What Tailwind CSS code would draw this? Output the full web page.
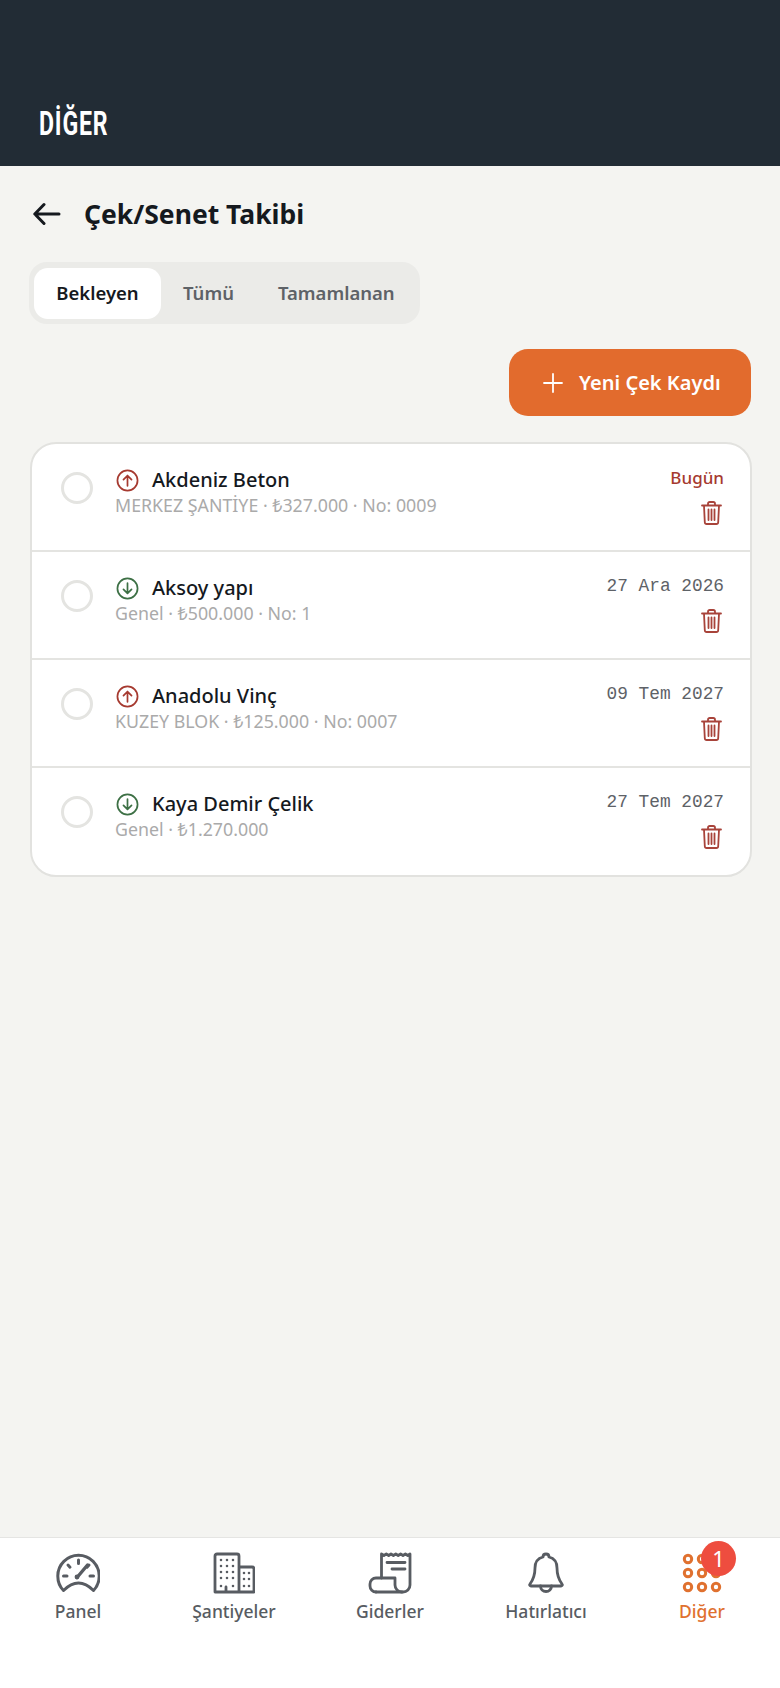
<!DOCTYPE html>
<html lang="tr"><head><meta charset="utf-8"><script src="https://cdn.jsdelivr.net/npm/@tailwindcss/browser@4"></script><title>Çek/Senet Takibi</title></head>
<body class="m-0">
<div class="w-[780px] h-[1688px] flex flex-col bg-[#f4f4f1] overflow-hidden font-['Noto_Sans',sans-serif]">
  <header class="h-[166px] shrink-0 bg-[#222c35] pl-[39px] pt-[102px]">
    <div class="origin-left scale-x-[0.7] text-white font-['Roboto',sans-serif] font-bold text-[33px] leading-[44px] tracking-[1.200px]">DİĞER</div>
  </header>
  <main class="flex-1 px-[29px]">
    <div class="flex items-center h-[36px] mt-[30px] pl-[4px]">
      <svg class="w-[28px] h-[28px]" viewBox="0 0 28 28" fill="none" stroke="#15191e" stroke-width="3" stroke-linecap="round" stroke-linejoin="round"><path d="M26 14H2M11 4.500 1.800 14 11 23.500"/></svg>
      <h1 class="ml-[23px] text-[26.500px] leading-[36px] font-bold text-[#15191e]">Çek/Senet Takibi</h1>
    </div>
    <div class="mt-[30px] w-[391px] h-[62px] rounded-[18px] bg-[#ebebe8] flex items-center pl-[5px] text-[18.500px] font-semibold text-[#5e6267]">
      <div class="w-[127px] h-[51px] rounded-[14px] bg-white text-[#15191e] flex items-center justify-center">Bekleyen</div>
      <div class="ml-[22px]">Tümü</div>
      <div class="ml-[44px]">Tamamlanan</div>
    </div>
    <div class="flex justify-end mt-[25px]">
      <button class="w-[242px] h-[67px] rounded-[19px] bg-[#e26b2d] text-white flex items-center pl-[34px] gap-[16px] text-[20px] font-semibold">
        <svg class="w-[20px] h-[20px]" viewBox="0 0 20 20" stroke="currentColor" stroke-width="1.800" stroke-linecap="round"><path d="M10 1v18M1 10h18"/></svg>
        Yeni Çek Kaydı
      </button>
    </div>
    <section class="mt-[26px] w-[722px] ml-[1px] rounded-[26px] border-2 border-[#e2e2df] bg-white divide-y-2 divide-[#e4e4e1]">
      <div class="h-[108px] flex items-start pl-[29px] pr-[26px] pt-[24px]">
        <span class="w-[32px] h-[32px] mt-[4px] rounded-full border-[3px] border-[#e4e4e1]"></span>
        <div class="ml-[22px] flex-1">
          <div class="flex items-center h-[26px] gap-[13px] pl-[1px] text-[20px] font-medium text-[#15191e]">
            <svg class="w-[23px] h-[23px] -mt-[1px]" viewBox="0 0 24 24" fill="none" stroke="#a63a30" stroke-width="1.800" stroke-linecap="round" stroke-linejoin="round"><circle cx="12" cy="12" r="10.500"/><path d="M12 17.500V7M7.800 11 12 6.800l4.200 4.200"/></svg>
            <span class="-mt-[2px]">Akdeniz Beton</span>
          </div>
          <div class="text-[17.800px] leading-[23px] text-[#aaaaaa]">MERKEZ ŞANTİYE · ₺327.000 · No: 0009</div>
        </div>
        <div class="flex flex-col items-end -mt-[2px]">
          <div class="text-[17px] leading-[24px] font-medium text-[#a63a30]">Bugün</div>
          <svg class="w-[21px] h-[24px] mt-[11px] mr-[2px]" viewBox="0 0 21 24" fill="none" stroke="#a8433a" stroke-width="1.800" stroke-linecap="round" stroke-linejoin="round"><path d="M1 4.500h19M7 4.500V2.700A1.700 1.700 0 0 1 8.700 1h3.600A1.700 1.700 0 0 1 14 2.700v1.800M3 4.500l.8 16.700a1.900 1.900 0 0 0 1.900 1.800h9.600a1.900 1.900 0 0 0 1.900-1.800L18 4.500M7.500 8.500v10.500M10.500 8.500v10.500M13.500 8.500v10.500"/></svg>
        </div>
      </div>
      <div class="h-[108px] flex items-start pl-[29px] pr-[26px] pt-[24px]">
        <span class="w-[32px] h-[32px] mt-[4px] rounded-full border-[3px] border-[#e4e4e1]"></span>
        <div class="ml-[22px] flex-1">
          <div class="flex items-center h-[26px] gap-[13px] pl-[1px] text-[20px] font-medium text-[#15191e]">
            <svg class="w-[23px] h-[23px] -mt-[1px]" viewBox="0 0 24 24" fill="none" stroke="#3d7045" stroke-width="1.800" stroke-linecap="round" stroke-linejoin="round"><circle cx="12" cy="12" r="10.500"/><path d="M12 6.500V17M7.800 13 12 17.200l4.200-4.200"/></svg>
            <span class="-mt-[2px]">Aksoy yapı</span>
          </div>
          <div class="text-[17.800px] leading-[23px] text-[#aaaaaa]">Genel · ₺500.000 · No: 1</div>
        </div>
        <div class="flex flex-col items-end -mt-[2px]">
          <div class="text-[17.800px] leading-[24px] font-['Liberation_Mono',monospace] text-[#5e6267]">27 Ara 2026</div>
          <svg class="w-[21px] h-[24px] mt-[11px] mr-[2px]" viewBox="0 0 21 24" fill="none" stroke="#a8433a" stroke-width="1.800" stroke-linecap="round" stroke-linejoin="round"><path d="M1 4.500h19M7 4.500V2.700A1.700 1.700 0 0 1 8.700 1h3.600A1.700 1.700 0 0 1 14 2.700v1.800M3 4.500l.8 16.700a1.900 1.900 0 0 0 1.900 1.800h9.600a1.900 1.900 0 0 0 1.900-1.800L18 4.500M7.500 8.500v10.500M10.500 8.500v10.500M13.500 8.500v10.500"/></svg>
        </div>
      </div>
      <div class="h-[108px] flex items-start pl-[29px] pr-[26px] pt-[24px]">
        <span class="w-[32px] h-[32px] mt-[4px] rounded-full border-[3px] border-[#e4e4e1]"></span>
        <div class="ml-[22px] flex-1">
          <div class="flex items-center h-[26px] gap-[13px] pl-[1px] text-[20px] font-medium text-[#15191e]">
            <svg class="w-[23px] h-[23px] -mt-[1px]" viewBox="0 0 24 24" fill="none" stroke="#a63a30" stroke-width="1.800" stroke-linecap="round" stroke-linejoin="round"><circle cx="12" cy="12" r="10.500"/><path d="M12 17.500V7M7.800 11 12 6.800l4.200 4.200"/></svg>
            <span class="-mt-[2px]">Anadolu Vinç</span>
          </div>
          <div class="text-[17.800px] leading-[23px] text-[#aaaaaa]">KUZEY BLOK · ₺125.000 · No: 0007</div>
        </div>
        <div class="flex flex-col items-end -mt-[2px]">
          <div class="text-[17.800px] leading-[24px] font-['Liberation_Mono',monospace] text-[#5e6267]">09 Tem 2027</div>
          <svg class="w-[21px] h-[24px] mt-[11px] mr-[2px]" viewBox="0 0 21 24" fill="none" stroke="#a8433a" stroke-width="1.800" stroke-linecap="round" stroke-linejoin="round"><path d="M1 4.500h19M7 4.500V2.700A1.700 1.700 0 0 1 8.700 1h3.600A1.700 1.700 0 0 1 14 2.700v1.800M3 4.500l.8 16.700a1.900 1.900 0 0 0 1.900 1.800h9.600a1.900 1.900 0 0 0 1.900-1.800L18 4.500M7.500 8.500v10.500M10.500 8.500v10.500M13.500 8.500v10.500"/></svg>
        </div>
      </div>
      <div class="h-[107px] flex items-start pl-[29px] pr-[26px] pt-[24px]">
        <span class="w-[32px] h-[32px] mt-[4px] rounded-full border-[3px] border-[#e4e4e1]"></span>
        <div class="ml-[22px] flex-1">
          <div class="flex items-center h-[26px] gap-[13px] pl-[1px] text-[20px] font-medium text-[#15191e]">
            <svg class="w-[23px] h-[23px] -mt-[1px]" viewBox="0 0 24 24" fill="none" stroke="#3d7045" stroke-width="1.800" stroke-linecap="round" stroke-linejoin="round"><circle cx="12" cy="12" r="10.500"/><path d="M12 6.500V17M7.800 13 12 17.200l4.200-4.200"/></svg>
            <span class="-mt-[2px]">Kaya Demir Çelik</span>
          </div>
          <div class="text-[17.800px] leading-[23px] text-[#aaaaaa]">Genel · ₺1.270.000</div>
        </div>
        <div class="flex flex-col items-end -mt-[2px]">
          <div class="text-[17.800px] leading-[24px] font-['Liberation_Mono',monospace] text-[#5e6267]">27 Tem 2027</div>
          <svg class="w-[21px] h-[24px] mt-[11px] mr-[2px]" viewBox="0 0 21 24" fill="none" stroke="#a8433a" stroke-width="1.800" stroke-linecap="round" stroke-linejoin="round"><path d="M1 4.500h19M7 4.500V2.700A1.700 1.700 0 0 1 8.700 1h3.600A1.700 1.700 0 0 1 14 2.700v1.800M3 4.500l.8 16.700a1.900 1.900 0 0 0 1.900 1.800h9.600a1.900 1.900 0 0 0 1.900-1.800L18 4.500M7.500 8.500v10.500M10.500 8.500v10.500M13.500 8.500v10.500"/></svg>
        </div>
      </div>
    </section>
  </main>
  <nav class="h-[151px] shrink-0 bg-white border-t border-[#e5e5e3] grid grid-cols-5 text-[17.500px] font-medium text-[#585c62]">
    <div class="flex flex-col items-center pt-[14px]">
      <svg class="w-[44px] h-[42px]" viewBox="0 0 44 42" fill="none" stroke="currentColor" stroke-width="3" stroke-linecap="round" stroke-linejoin="round"><path d="M7.500 38.500C3.500 34.500 1.800 29.500 1.800 24a20.700 20.700 0 0 1 41.400 0c0 5.500-1.700 10.500-5.700 14.500C33 34 28.500 31 22.500 31S12 34 7.500 38.500Z"/><path d="M22.500 8v3.500M12 13l2 2.200M33 13l-2 2.200M7.500 24H11M34 24h3.500"/><path d="M21 25.500 31.500 13" stroke-width="3.400"/><circle cx="21" cy="25" r="2.400" fill="currentColor" stroke="none"/></svg>
      <span class="mt-[5px] leading-[24px]">Panel</span>
    </div>
    <div class="flex flex-col items-center pt-[14px]">
      <svg class="w-[42px] h-[42px]" viewBox="0 0 42 42" fill="none" stroke="currentColor" stroke-width="2.800" stroke-linecap="round" stroke-linejoin="round"><path d="M2 40V4a2 2 0 0 1 2-2h20a2 2 0 0 1 2 2v36M26 15h13a2 2 0 0 1 2 2v23H2M13 40v-5"/><g stroke-width="2.600"><path d="M8 8h.01M14 8h.01M20 8h.01M8 14h.01M14 14h.01M20 14h.01M8 20h.01M14 20h.01M20 20h.01M8 26h.01M14 26h.01M20 26h.01M8 34h.01M20 34h.01M31 21h.01M36 21h.01M31 27h.01M36 27h.01M31 34h.01M36 34h.01"/></g></svg>
      <span class="mt-[5px] leading-[24px]">Şantiyeler</span>
    </div>
    <div class="flex flex-col items-center pt-[14px]">
      <svg class="w-[44px] h-[42px]" viewBox="0 0 44 42" fill="none" stroke="currentColor" stroke-width="2.800" stroke-linecap="round" stroke-linejoin="round"><path d="M13.500 26V2l2.400 1.500L18.300 2l2.400 1.500L23 2l2.400 1.500L27.800 2l2.400 1.500L32.600 2 35 3.500 37.400 2 39.800 3.500 42 2v31a7 7 0 0 1-7 7H8"/><path d="M19 10.500h18M24 17h13M8 40a6 6 0 0 1-6-6v-2a6 6 0 0 1 6-6h19v7a7 7 0 0 0 7 7"/></svg>
      <span class="mt-[5px] leading-[24px]">Giderler</span>
    </div>
    <div class="flex flex-col items-center pt-[14px]">
      <svg class="w-[36px] h-[42px]" viewBox="0 0 36 42" fill="none" stroke="currentColor" stroke-width="2.800" stroke-linecap="round" stroke-linejoin="round"><path d="M18 2c-2 0-3 1.300-3 3C9 6.500 7 11 7 16c0 8-2 12-5 16-.8 1 0 2 1 2h30c1 0 1.800-1 1-2-3-4-5-8-5-16 0-5-2-9.500-8-11 0-1.700-1-3-3-3Z"/><path d="M12.500 34a5.500 5.500 0 0 0 11 0"/></svg>
      <span class="mt-[5px] leading-[24px]">Hatırlatıcı</span>
    </div>
    <div class="relative flex flex-col items-center pt-[14px] text-[#e0712f]">
      <svg class="w-[42px] h-[42px]" viewBox="0 0 42 42" fill="none" stroke="currentColor" stroke-width="3"><circle cx="7" cy="7" r="3.700"/><circle cx="21" cy="7" r="3.700"/><circle cx="35" cy="7" r="3.700"/><circle cx="7" cy="21" r="3.700"/><circle cx="21" cy="21" r="3.700"/><circle cx="35" cy="21" r="3.700"/><circle cx="7" cy="35" r="3.700"/><circle cx="21" cy="35" r="3.700"/><circle cx="35" cy="35" r="3.700"/></svg>
      <span class="mt-[5px] leading-[24px]">Diğer</span>
      <span class="absolute left-[77px] top-[3px] w-[35px] h-[35px] rounded-full bg-[#ee4d3f] text-white text-[22px] font-normal flex items-center justify-center">1</span>
    </div>
  </nav>
</div>
</body></html>
